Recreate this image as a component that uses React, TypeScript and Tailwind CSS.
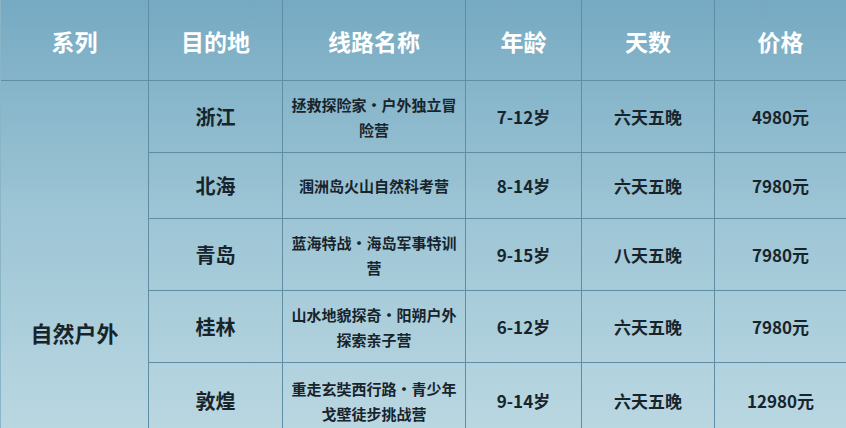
const rows = [
  { city: "浙江", route: ["拯救探险家・户外独立冒", "险营"], age: "7-12岁", days: "六天五晚", price: "4980元" },
  { city: "北海", route: ["涠洲岛火山自然科考营"], age: "8-14岁", days: "六天五晚", price: "7980元" },
  { city: "青岛", route: ["蓝海特战・海岛军事特训", "营"], age: "9-15岁", days: "八天五晚", price: "7980元" },
  { city: "桂林", route: ["山水地貌探奇・阳朔户外", "探索亲子营"], age: "6-12岁", days: "六天五晚", price: "7980元" },
  { city: "敦煌", route: ["重走玄奘西行路・青少年", "戈壁徒步挑战营"], age: "9-14岁", days: "六天五晚", price: "12980元" },
];

const headers = ["系列", "目的地", "线路名称", "年龄", "天数", "价格"];

export default function App() {
  return (
    <div className="w-[846px] h-[428px] overflow-hidden bg-gradient-to-b from-[#76aac2] via-[#9dc5d5] to-[#b9d7e1] font-['Noto_Sans_CJK_SC',sans-serif]">
      <div className="grid grid-cols-[148px_134px_183px_116px_133px_131px] grid-rows-[81px_72px_66px_72px_72px_76px] border-l border-[#8ab5c7]">
        {headers.map((h, i) => (
          <div
            key={h}
            className={`flex items-center justify-center pt-0.5 border-b border-[#5f8ea4] text-white font-bold text-[23px] ${i < 5 ? "border-r" : ""}`}
          >
            {h}
          </div>
        ))}
        <div className="row-span-5 flex justify-center pt-[235px] border-r border-[#5f8ea4] text-[#18242c] font-bold text-[22px]">
          自然户外
        </div>
        {rows.map((r) => (
          <div key={r.city} className="contents">
            <div className="flex items-center justify-center border-r border-b border-[#5f8ea4] text-[#18242c] font-bold text-[20px]">
              {r.city}
            </div>
            <div className="flex flex-col items-center justify-center border-r border-b border-[#5f8ea4] text-[#18242c] font-bold text-[15px] leading-[25px]">
              {r.route.map((line) => (
                <span key={line} className="whitespace-nowrap">
                  {line}
                </span>
              ))}
            </div>
            <div className="flex items-center justify-center border-r border-b border-[#5f8ea4] text-[#18242c] font-bold text-[17px]">
              {r.age}
            </div>
            <div className="flex items-center justify-center border-r border-b border-[#5f8ea4] text-[#18242c] font-bold text-[17px]">
              {r.days}
            </div>
            <div className="flex items-center justify-center border-b border-[#5f8ea4] text-[#18242c] font-bold text-[17px]">
              {r.price}
            </div>
          </div>
        ))}
      </div>
    </div>
  );
}
